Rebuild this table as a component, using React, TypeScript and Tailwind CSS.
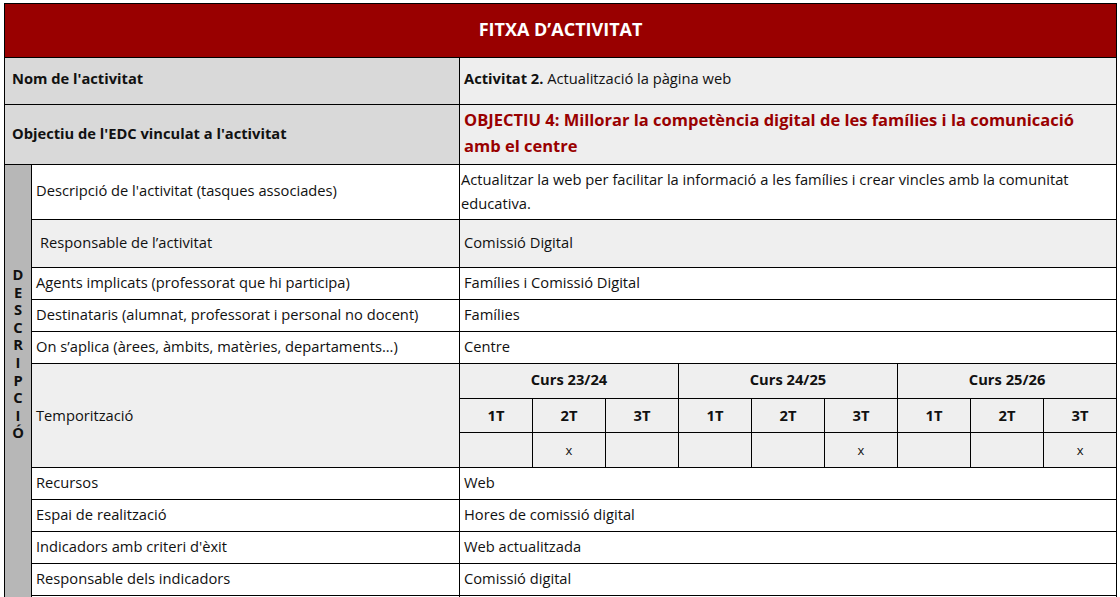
import React from "react";

const rows1 = [
    { label: "Agents implicats (professorat que hi participa)", value: "Famílies i Comissió Digital" },
    { label: "Destinataris (alumnat, professorat i personal no docent)", value: "Famílies" },
    { label: "On s’aplica (àrees, àmbits, matèries, departaments...)", value: "Centre" },
];

const rows2 = [
    { label: "Recursos", value: "Web" },
    { label: "Espai de realització", value: "Hores de comissió digital" },
    { label: "Indicadors amb criteri d'èxit", value: "Web actualitzada" },
    { label: "Responsable dels indicadors", value: "Comissió digital" },
    { label: "Observacions", value: "" },
];

const marks = ["", "x", "", "", "", "x", "", "", "x"];
const cell = "border border-black align-middle";

export default function App() {
    return (
        <div className="min-h-[597px] bg-white font-['Open_Sans',sans-serif] text-[14.7px] leading-[20px] text-[#111] pt-[3px] pl-[4px]">
            <table className="border-collapse table-fixed w-[1113px]">
                <colgroup>
                    <col className="w-[27px]" />
                    <col className="w-[428px]" />
                    {marks.map((_, i) => (
                        <col key={i} className="w-[73px]" />
                    ))}
                </colgroup>
                <tbody>
                    <tr>
                        <td colSpan={11} className={`${cell} h-[54px] pb-[3px] bg-[#990000] text-center text-white font-bold text-[18px]`}>
                            FITXA D’ACTIVITAT
                        </td>
                    </tr>
                    <tr>
                        <td colSpan={2} className={`${cell} h-[47px] pb-[7px] bg-[#d9d9d9] font-bold pl-[7px]`}>
                            Nom de l'activitat
                        </td>
                        <td colSpan={9} className={`${cell} pb-[7px] bg-[#eeeeee] pl-[4px]`}>
                            <b>Activitat 2.</b> Actualització la pàgina web
                        </td>
                    </tr>
                    <tr>
                        <td colSpan={2} className={`${cell} h-[60px] pb-[3px] bg-[#d9d9d9] font-bold pl-[7px]`}>
                            Objectiu de l'EDC vinculat a l'activitat
                        </td>
                        <td colSpan={9} className={`${cell} bg-[#eeeeee] pl-[4px] pr-[30px] pb-[3px] text-[16.5px] leading-[26px] font-bold text-[#990000]`}>
                            OBJECTIU 4: Millorar la competència digital de les famílies i la comunicació amb el centre
                        </td>
                    </tr>
                    <tr>
                        <td rowSpan={13} className="border border-black bg-[#b7b7b7] align-top pt-[101px] text-center font-bold text-[14.7px] leading-[17.6px]">
                            {"DESCRIPCIÓ".split("").map((c, i) => (
                                <div key={i}>{c}</div>
                            ))}
                        </td>
                        <td className={`${cell} h-[55px] pb-[4px] pl-[4px]`}>Descripció de l'activitat (tasques associades)</td>
                        <td colSpan={9} className={`${cell} pb-[2px] pl-[1px] pr-[20px] leading-[24px]`}>
                            Actualitzar la web per facilitar la informació a les famílies i crear vincles amb la comunitat educativa.
                        </td>
                    </tr>
                    <tr className="bg-[#efefef]">
                        <td className={`${cell} h-[48px] pb-[4px] pl-[8px]`}>Responsable de l’activitat</td>
                        <td colSpan={9} className={`${cell} pb-[4px] pl-[4px]`}>Comissió Digital</td>
                    </tr>
                    {rows1.map((r) => (
                        <tr key={r.label}>
                            <td className={`${cell} h-[32px] pb-[3px] pl-[4px]`}>{r.label}</td>
                            <td colSpan={9} className={`${cell} pb-[3px] pl-[4px]`}>{r.value}</td>
                        </tr>
                    ))}
                    <tr className="bg-[#efefef]">
                        <td rowSpan={3} className={`${cell} pb-[2px] pl-[4px]`}>Temporització</td>
                        {["Curs 23/24", "Curs 24/25", "Curs 25/26"].map((c) => (
                            <td key={c} colSpan={3} className={`${cell} h-[35px] pb-[4px] text-center font-bold`}>
                                {c}
                            </td>
                        ))}
                    </tr>
                    <tr className="bg-[#efefef]">
                        {marks.map((_, i) => (
                            <td key={i} className={`${cell} h-[34px] pb-[2px] text-center font-bold`}>
                                {`${(i % 3) + 1}T`}
                            </td>
                        ))}
                    </tr>
                    <tr className="bg-[#efefef]">
                        {marks.map((m, i) => (
                            <td key={i} className={`${cell} h-[35px] text-center text-[13px]`}>
                                {m}
                            </td>
                        ))}
                    </tr>
                    {rows2.map((r) => (
                        <tr key={r.label}>
                            <td className={`${cell} h-[32px] pb-[3px] pl-[4px]`}>{r.label}</td>
                            <td colSpan={9} className={`${cell} pb-[3px] pl-[4px]`}>{r.value}</td>
                        </tr>
                    ))}
                </tbody>
            </table>
        </div>
    );
}
